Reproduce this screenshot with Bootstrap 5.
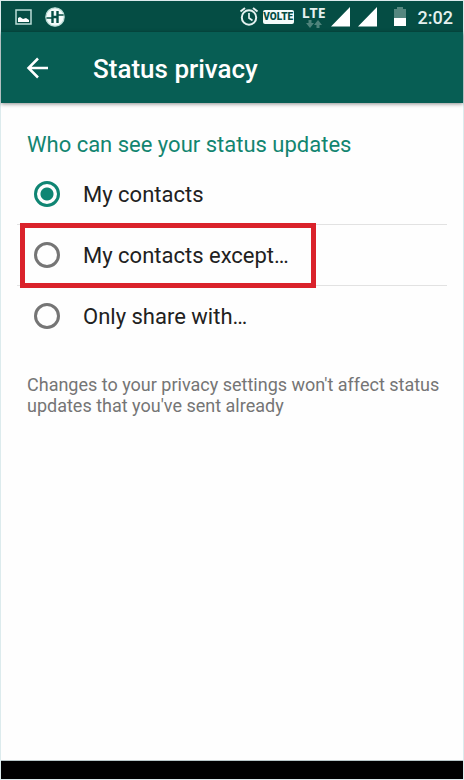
<!DOCTYPE html>
<html lang="en">
<head>
<meta charset="utf-8">
<meta name="viewport" content="width=device-width, initial-scale=1">
<title>Status privacy</title>
<link href="https://cdn.jsdelivr.net/npm/bootstrap@5.3.0/dist/css/bootstrap.min.css" rel="stylesheet">
<style>
  body { font-family: Roboto, "Liberation Sans", sans-serif; color: #212121; background: #fefefe; }
  .screen { border: 1px solid #dcebed; }
  .status-bar { background: #054d44; height: 31px; padding: 0 10px 0 14px; }
  .left-icons { gap: 13px; }
  .clock { font-size: 18px; line-height: 31px; font-weight: 500; color: #e4f1ef; margin-left: 12px; padding-top: 2px; }
  .volte { background: #f4fbfa; color: #054d44; font: 900 10px/14px Roboto, sans-serif; border-radius: 2px; width: 31px; margin: 0 8px 0 4px; }
  .lte { font: 700 14px/14px "Open Sans", sans-serif; color: #e4f1ef; }
  .app-bar { background: #075e54; height: 71px; padding: 2px 24px 0; box-shadow: 0 1px 4px rgba(0, 0, 0, .45); }
  .app-title { font-size: 26px; line-height: 32px; font-weight: 500; margin-left: 44px; }
  .section-title { font-size: 22px; line-height: 28px; color: #128570; padding: 28px 26px 5px; }
  .options { margin: 0 16px; }
  .option { height: 61px; padding: 0 17px; border-bottom: 1px solid #e2e2e2; }
  .option:last-child { border-bottom-color: transparent; }
  .option label { font-size: 22px; line-height: 60px; padding: 2px 0 0 23px; }
  .option .form-check-input { width: 26px; height: 26px; border: 3px solid #757575; background-color: #fefefe; }
  .option .form-check-input:checked { border-color: #0f8573; background-image: radial-gradient(circle, #0f8573 6px, transparent 7px); }
  .highlight { top: -2px; left: 3px; width: 296px; height: 65px; border: 5px solid #da222b; pointer-events: none; }
  .note { font-size: 18px; line-height: 21px; color: #757575; padding: 27px 20px 0 26px; }
  .bottom-bar { background: #000; height: 18px; border-top: 1px solid #b8c6c8; box-sizing: content-box; }
</style>
</head>
<body>
<div class="screen d-flex flex-column min-vh-100">
  <div class="status-bar d-flex align-items-center justify-content-between">
    <div class="left-icons d-flex align-items-center">
      <svg width="17" height="16" viewBox="0 0 17 16" aria-hidden="true"><path d="M1 1h15v14H1z" fill="none" stroke="#b9dcd6" stroke-width="1.5"/><path d="M3 13V9l2-1 3 2 3-1 3 2v2z" fill="#fff"/></svg>
      <svg width="20" height="22" viewBox="0 0 20 22" aria-hidden="true"><circle cx="10" cy="11" r="9.200" fill="#f4fbfa" stroke="#b9dcd6" stroke-width="1.200"/><path d="M7.500 5v12M12.500 5v12M7.500 11h5" fill="none" stroke="#054d44" stroke-width="2.400"/><path d="M1.500 12h6M12.500 9h6" fill="none" stroke="#054d44" stroke-width="1.500"/></svg>
    </div>
    <div class="d-flex align-items-center">
      <svg width="20" height="21" viewBox="0 0 20 21" fill="none" stroke="#e4f1ef" aria-hidden="true"><circle cx="10" cy="11.500" r="7.200" stroke-width="2"/><path d="M10 7v5l3.500 2.500" stroke-width="1.700"/><path d="M1.500 5.500L6 2M18.500 5.500L14 2" stroke-width="2"/></svg>
      <span class="volte text-center">VOLTE</span>
      <span class="d-flex flex-column align-items-center"><span class="lte">LTE</span>
        <svg width="18" height="8" viewBox="0 0 18 8" fill="#4f837b" aria-hidden="true"><path d="M3.500 0h3v3H9L5 8 1 3h2.500zM11.500 8h3V5H17l-4-5-4 5h2.500z"/></svg></span>
      <svg class="ms-1" width="48" height="20" viewBox="0 0 48 20" fill="#fff" aria-hidden="true"><path d="M1 19.500L20 0v19.500zM28 19.500L47 0v19.500z"/></svg>
      <svg class="ms-3" width="12" height="20" viewBox="0 0 12 20" aria-hidden="true"><path d="M0 2h3V0h6v2h3v10H0z" fill="#55877f"/><path d="M0 11h12v8H0z" fill="#fff"/></svg>
      <span class="clock">2:02</span>
    </div>
  </div>
  <header class="app-bar d-flex align-items-center text-white">
    <button class="btn border-0 p-0 d-flex" type="button" aria-label="Back">
      <svg width="24" height="24" viewBox="0 0 24 24" fill="none" stroke="#fff" stroke-width="2.500" aria-hidden="true"><path d="M23 11H4M13 1.500L3.500 11l9.500 9.500"/></svg>
    </button>
    <h1 class="app-title mb-0">Status privacy</h1>
  </header>
  <main class="flex-grow-1">
    <h2 class="section-title mb-0 fw-normal" id="who">Who can see your status updates</h2>
    <div class="options" role="radiogroup" aria-labelledby="who">
      <div class="option d-flex align-items-center">
        <input class="form-check-input m-0 flex-shrink-0" type="radio" name="audience" id="all" checked>
        <label class="flex-grow-1" for="all">My contacts</label>
      </div>
      <div class="option d-flex align-items-center position-relative">
        <input class="form-check-input m-0 flex-shrink-0" type="radio" name="audience" id="except">
        <label class="flex-grow-1" for="except">My contacts except…</label>
        <div class="highlight position-absolute"></div>
      </div>
      <div class="option d-flex align-items-center">
        <input class="form-check-input m-0 flex-shrink-0" type="radio" name="audience" id="only">
        <label class="flex-grow-1" for="only">Only share with…</label>
      </div>
    </div>
    <p class="note mb-0">Changes to your privacy settings won't affect status updates that you've sent already</p>
  </main>
  <div class="bottom-bar"></div>
</div>
<script src="https://cdn.jsdelivr.net/npm/bootstrap@5.3.0/dist/js/bootstrap.bundle.min.js"></script>
</body>
</html>
